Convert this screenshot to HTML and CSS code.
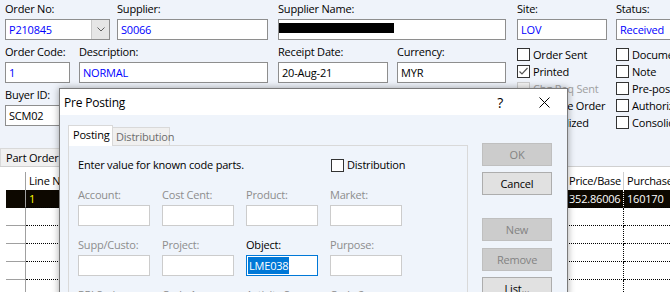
FILE: index.html
```html
<!DOCTYPE html>
<html lang="en">
<head>
    <meta charset="UTF-8">
    <title>Purchase Order Receipt</title>
    <link rel="stylesheet" href="styles.css">
</head>
<body>
    <div class="form">
        <div class="top">
            <div class="left">
                <div class="row">
                    <div class="field f-order">
                        <label>Order No:</label>
                        <div class="combo">
                            <span class="val blue">P210845</span>
                            <span class="drop"><svg width="8" height="5" viewBox="0 0 8 5"><polyline points="0.5,0.5 4,4 7.5,0.5" fill="none" stroke="#606060" stroke-width="1"/></svg></span>
                        </div>
                    </div>
                    <div class="field f-supp">
                        <label>Supplier:</label>
                        <div class="box blue">S0066</div>
                    </div>
                    <div class="field f-sname">
                        <label>Supplier Name:</label>
                        <div class="box sname"><span class="redact"></span></div>
                    </div>
                </div>
                <div class="row">
                    <div class="field f-ocode">
                        <label>Order Code:</label>
                        <div class="box blue">1</div>
                    </div>
                    <div class="field f-desc">
                        <label>Description:</label>
                        <div class="box blue">NORMAL</div>
                    </div>
                    <div class="field f-rdate">
                        <label>Receipt Date:</label>
                        <div class="box">20-Aug-21</div>
                    </div>
                    <div class="field f-curr">
                        <label>Currency:</label>
                        <div class="box">MYR</div>
                    </div>
                </div>
                <div class="row">
                    <div class="field f-buyer">
                        <label>Buyer ID:</label>
                        <div class="box">SCM02</div>
                    </div>
                    <div class="field f-deliv">
                        <label>Delivery Address:</label>
                        <div class="box"></div>
                    </div>
                    <div class="field f-pay">
                        <label>Payment Address:</label>
                        <div class="box"></div>
                    </div>
                    <div class="field f-inv">
                        <label>Supplier Inv:</label>
                        <div class="box"></div>
                    </div>
                </div>
            </div>

            <div class="right">
                <div class="col">
                    <div class="field">
                        <label>Site:</label>
                        <div class="box blue">LOV</div>
                    </div>
                    <div class="checks">
                        <div class="chk"><span class="cb"></span>Order Sent</div>
                        <div class="chk"><span class="cb"><svg width="11" height="11" viewBox="0 0 11 11"><polyline points="1.5,5.5 4,8 9.5,2" fill="none" stroke="#555" stroke-width="1.2"/></svg></span>Printed</div>
                        <div class="chk off"><span class="cb"></span>Chg Req Sent</div>
                        <div class="chk"><span class="cb"></span>Multiple Order</div>
                        <div class="chk"><span class="cb"></span>Centralized</div>
                    </div>
                </div>
                <div class="col">
                    <div class="field">
                        <label>Status:</label>
                        <div class="box blue">Received</div>
                    </div>
                    <div class="checks">
                        <div class="chk"><span class="cb"></span>Document Received</div>
                        <div class="chk"><span class="cb"></span>Note</div>
                        <div class="chk"><span class="cb"></span>Pre-posted</div>
                        <div class="chk"><span class="cb"></span>Authorized</div>
                        <div class="chk"><span class="cb"></span>Consolidated</div>
                    </div>
                </div>
            </div>
        </div>

        <div class="lines">
            <div class="tabstrip"><span class="ptab">Part Order Lines</span></div>
            <div class="grid">
                <div class="grow ghead">
                    <div class="rh"></div>
                    <div class="c c-line">Line No</div>
                    <div class="c c-mid">Part No</div>
                    <div class="c c-price">Price/Base</div>
                    <div class="c c-purch">Purchase Qty</div>
                </div>
                <div class="grow sel">
                    <div class="rh"></div>
                    <div class="c c-line">1</div>
                    <div class="c c-mid"></div>
                    <div class="c c-price">352.86006</div>
                    <div class="c c-purch">160170</div>
                </div>
                <div class="grow">
                    <div class="rh"></div>
                    <div class="c c-line"></div>
                    <div class="c c-mid"></div>
                    <div class="c c-price"></div>
                    <div class="c c-purch"></div>
                </div>
                <div class="grow">
                    <div class="rh"></div>
                    <div class="c c-line"></div>
                    <div class="c c-mid"></div>
                    <div class="c c-price"></div>
                    <div class="c c-purch"></div>
                </div>
                <div class="grow">
                    <div class="rh"></div>
                    <div class="c c-line"></div>
                    <div class="c c-mid"></div>
                    <div class="c c-price"></div>
                    <div class="c c-purch"></div>
                </div>
                <div class="grow">
                    <div class="rh"></div>
                    <div class="c c-line"></div>
                    <div class="c c-mid"></div>
                    <div class="c c-price"></div>
                    <div class="c c-purch"></div>
                </div>
                <div class="grow">
                    <div class="rh"></div>
                    <div class="c c-line"></div>
                    <div class="c c-mid"></div>
                    <div class="c c-price"></div>
                    <div class="c c-purch"></div>
                </div>
            </div>
        </div>
    </div>

    <div class="dialog">
        <div class="dlg-title">
            <span class="dlg-name">Pre Posting</span>
            <span class="dlg-help">?</span>
            <svg class="dlg-close" width="11" height="11" viewBox="0 0 11 11"><path d="M0.5 0.5 L10.5 10.5 M10.5 0.5 L0.5 10.5" stroke="#000" stroke-width="1"/></svg>
        </div>
        <div class="dlg-body">
            <div class="dlg-main">
                <div class="tabs">
                    <div class="tab on">Posting</div>
                    <div class="tab">Distribution</div>
                </div>
                <div class="panel">
                    <div class="intro">
                        <span class="intro-text">Enter value for known code parts.</span>
                        <span class="chk"><span class="cb"></span>Distribution</span>
                    </div>
                    <div class="parts">
                        <div class="fld"><label>Account:</label><div class="inp"></div></div>
                        <div class="fld"><label>Cost Cent:</label><div class="inp"></div></div>
                        <div class="fld"><label>Product:</label><div class="inp"></div></div>
                        <div class="fld"><label>Market:</label><div class="inp"></div></div>
                        <div class="fld"><label>Supp/Custo:</label><div class="inp"></div></div>
                        <div class="fld"><label>Project:</label><div class="inp"></div></div>
                        <div class="fld act"><label>Object:</label><div class="inp focus"><span class="picked">LME038</span></div></div>
                        <div class="fld"><label>Purpose:</label><div class="inp"></div></div>
                        <div class="fld"><label>PRJ Series:</label><div class="inp"></div></div>
                        <div class="fld"><label>Code 1:</label><div class="inp"></div></div>
                        <div class="fld"><label>Activity Seq:</label><div class="inp"></div></div>
                        <div class="fld"><label>Code 2:</label><div class="inp"></div></div>
                    </div>
                </div>
            </div>
            <div class="btns">
                <div class="btn dis">OK</div>
                <div class="btn b-cancel">Cancel</div>
                <div class="btn dis b-new">New</div>
                <div class="btn dis b-remove">Remove</div>
                <div class="btn b-list">List...</div>
            </div>
        </div>
    </div>
</body>
</html>
```

FILE: styles.css
```css
* {
    box-sizing: border-box;
}

body {
    margin: 0;
    width: 670px;
    height: 292px;
    overflow: hidden;
    position: relative;
    background-color: #eff3fa;
    font-family: 'Open Sans', 'Noto Sans', sans-serif;
    font-size: 11px;
    letter-spacing: -0.2px;
    color: #000;
}

.form {
    padding: 2px 0 0 5px;
}

.top {
    display: flex;
}

.left {
    width: 501px;
    flex: none;
}

.row {
    display: flex;
    margin-bottom: 5px;
}

.field label {
    display: block;
    height: 14px;
    line-height: 14px;
    margin-bottom: 3px;
    white-space: nowrap;
}

.box {
    height: 21px;
    line-height: 19px;
    border: 1px solid #8e8e8e;
    background-color: #fff;
    padding-left: 3px;
    white-space: nowrap;
    overflow: hidden;
}

.blue {
    color: #0000ff;
}

.combo {
    display: flex;
    height: 21px;
    border: 1px solid #8e8e8e;
    background-color: #fff;
}

.combo .val {
    flex: 1;
    padding-left: 3px;
    line-height: 19px;
}

.combo .drop {
    width: 18px;
    background-color: #e6e6e6;
    border-left: 1px solid #c8c8c8;
    display: flex;
    align-items: center;
    justify-content: center;
}

.box.sname {
    padding: 3px 0 0 0;
}

.redact {
    display: block;
    width: 115px;
    height: 10px;
    background-color: #000;
}

.f-order { width: 105px; }
.f-supp { width: 151px; margin-left: 7px; }
.f-sname { width: 228px; margin-left: 10px; }
.f-ocode { width: 65px; }
.f-desc { width: 189px; margin-left: 9px; }
.f-rdate { width: 110px; margin-left: 10px; }
.f-curr { width: 109px; margin-left: 9px; }
.f-buyer { width: 122px; }
.f-deliv { width: 131px; margin-left: 10px; }
.f-pay { width: 111px; margin-left: 9px; }
.f-inv { width: 109px; margin-left: 9px; }

.right {
    display: flex;
    margin-left: 11px;
}

.col {
    width: 90px;
    flex: none;
}

.col + .col {
    margin-left: 9px;
}

.checks {
    margin-top: 6px;
}

.chk {
    display: flex;
    align-items: center;
    height: 17px;
    white-space: nowrap;
}

.cb {
    width: 13px;
    height: 13px;
    border: 1px solid #333;
    background-color: #fff;
    margin-right: 3px;
    flex: none;
    display: flex;
    align-items: center;
    justify-content: center;
}

.chk.off {
    color: #a0a0a0;
}

.chk.off .cb {
    border-color: #cccccc;
    background-color: #f4f4f4;
}

/* order lines behind the dialog */
.lines {
    margin: 17px 0 0 -5px;
}

.tabstrip {
    height: 18px;
}

.ptab {
    display: inline-block;
    height: 18px;
    line-height: 17px;
    padding: 0 5px;
    background-color: #f0f0f0;
    border: 1px solid #d9d9d9;
    border-bottom: none;
}

.grid {
    background-color: #fff;
    border-top: 1px solid #d0d0d0;
    padding: 5px 0 0 6px;
    height: 200px;
}

.grow {
    display: flex;
    height: 18px;
    line-height: 17px;
}

.rh {
    width: 20px;
    flex: none;
    border-right: 1px solid #a0a0a0;
    border-bottom: 1px solid #a0a0a0;
}

.c {
    flex: none;
    padding-left: 3px;
    border-right: 1px dotted #000;
    border-bottom: 1px dotted #000;
    white-space: nowrap;
    overflow: hidden;
}

.c-line { width: 80px; }
.c-mid { width: 460px; }
.c-price { width: 58px; }
.c-purch { width: 80px; }

.ghead .rh {
    border-bottom: none;
}

.ghead .c {
    border-right: 1px solid #cfcfcf;
    border-bottom: none;
}

.sel {
    background-color: #0d0800;
    color: #fff;
}

.sel .rh {
    border-bottom-color: #0d0800;
}

.sel .c {
    border-right-color: #fff;
}

.sel .c-line {
    color: #ffff00;
}

/* Pre Posting dialog */
.dialog {
    position: absolute;
    left: 59px;
    top: 88px;
    width: 509px;
    height: 230px;
    background-color: #eff4fb;
    border: 1px solid #7a7a7a;
    box-shadow: 0 0 7px rgba(0, 0, 0, 0.35);
}

.dlg-title {
    height: 26px;
    background-color: #fff;
    display: flex;
    align-items: center;
    padding-left: 4px;
    font-size: 12px;
}

.dlg-name {
    flex: 1;
}

.dlg-help {
    font-size: 14px;
    margin-right: 36px;
}

.dlg-close {
    margin-right: 17px;
}

.dlg-body {
    display: flex;
    padding: 10px 0 0 8px;
}

.tabs {
    display: flex;
    align-items: flex-end;
    height: 20px;
}

.tab {
    width: 57px;
    height: 18px;
    line-height: 17px;
    padding-left: 3px;
    border: 1px solid #d9d9d9;
    border-left: none;
    border-bottom: none;
    background-color: #f0f0f0;
    color: #6d6d6d;
    white-space: nowrap;
}

.tab.on {
    width: 45px;
    height: 21px;
    line-height: 18px;
    padding-left: 4px;
    margin-bottom: -1px;
    border-left: 1px solid #d9d9d9;
    background-color: #fff;
    color: #000;
    position: relative;
    z-index: 1;
}

.panel {
    width: 400px;
    height: 200px;
    border: 1px solid #d9d9d9;
    padding: 12px 0 0 9px;
}

.intro,
.parts {
    display: grid;
    grid-template-columns: repeat(4, 72px);
    column-gap: 12px;
}

.intro {
    height: 14px;
    line-height: 14px;
}

.intro-text {
    grid-column: 1 / 4;
    white-space: nowrap;
}

.intro .chk {
    height: 14px;
    margin-left: 1px;
}

.parts {
    row-gap: 12px;
    margin-top: 16px;
}

.fld label {
    display: block;
    height: 14px;
    line-height: 14px;
    margin-bottom: 3px;
    color: #8d8d8d;
    white-space: nowrap;
}

.fld.act label {
    color: #000;
}

.inp {
    height: 21px;
    border: 1px solid #cccccc;
    background-color: #fff;
    line-height: 17px;
    padding: 1px 0 0 1px;
}

.inp.focus {
    border-color: #0078d7;
}

.picked {
    display: inline-block;
    background-color: #0078d7;
    color: #fff;
    padding: 0 1px;
}

.btns {
    width: 70px;
    margin: 18px 0 0 14px;
    display: flex;
    flex-direction: column;
}

.btn {
    height: 23px;
    line-height: 21px;
    text-align: center;
    border: 1px solid #adadad;
    background-color: #e1e1e1;
}

.btn.dis {
    background-color: #cccccc;
    border-color: #bfbfbf;
    color: #838383;
}

.b-cancel { margin-top: 6px; }
.b-new { margin-top: 23px; }
.b-remove { margin-top: 7px; }
.b-list { margin-top: 6px; }
```
